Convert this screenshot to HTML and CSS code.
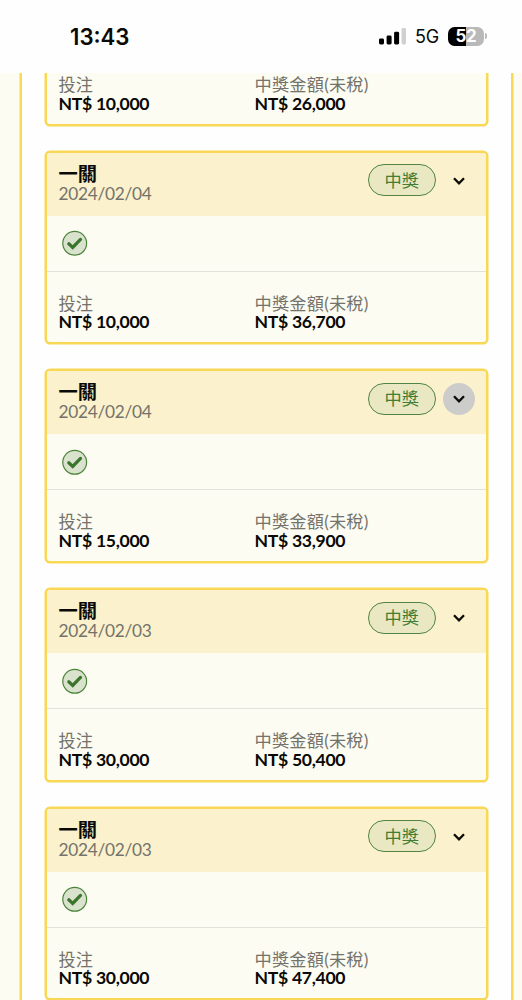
FILE: index.html
```
<!DOCTYPE html>
<html lang="zh-Hant">
<head>
<meta charset="utf-8">
<title>中獎紀錄</title>
<link rel="stylesheet" href="styles.css">
</head>
<body>
<svg class="defs" width="0" height="0">
  <symbol id="check" viewBox="0 0 26 26"><circle cx="12.7" cy="13.3" r="11.9" fill="#d8e2cd" stroke="#4b8438" stroke-width="1.2"/><path d="M6.8 13.8 10.7 17.4 18.5 9.4" fill="none" stroke="#3b752b" stroke-width="3.2" stroke-linecap="round"/></symbol>
  <symbol id="chevron" viewBox="0 0 12 8"><path d="M1 1.3 6 6.3 11 1.3" fill="none" stroke="#0b0b08" stroke-width="2.3"/></symbol>
</svg>
<header class="status">
  <time class="clock">13:43</time>
  <div class="indicators">
    <svg class="signal" width="27" height="17" viewBox="0 0 27 17"><rect x="0" y="10.5" width="5" height="6" rx="1.4"/><rect x="7.6" y="7.5" width="5" height="9" rx="1.4"/><rect x="15.1" y="3.8" width="5" height="12.7" rx="1.4"/><rect x="22.6" y="0" width="4.4" height="16.5" rx="1.4" fill="#d0d0d0"/></svg>
    <span class="network">5G</span>
    <span class="battery"><span class="level"><b>5</b><b>2</b></span><i class="tip"></i></span>
  </div>
</header>
<main class="list">
  <article class="card clipped">
    <dl class="amounts"><div class="stake"><dt>投注</dt><dd>NT$ 10,000</dd></div><div><dt class="wide">中獎金額(未稅)</dt><dd>NT$ 26,000</dd></div></dl>
  </article>
  <article class="card">
    <div class="head"><div class="title"><h2>一關</h2><p>2024/02/04</p></div><span class="badge">中獎</span><button class="toggle"><svg width="12" height="8"><use href="#chevron"/></svg></button></div>
    <div class="result"><svg width="26" height="26"><use href="#check"/></svg></div>
    <dl class="amounts"><div class="stake"><dt>投注</dt><dd>NT$ 10,000</dd></div><div><dt class="wide">中獎金額(未稅)</dt><dd>NT$ 36,700</dd></div></dl>
  </article>
  <article class="card">
    <div class="head"><div class="title"><h2>一關</h2><p>2024/02/04</p></div><span class="badge">中獎</span><button class="toggle active"><svg width="12" height="8"><use href="#chevron"/></svg></button></div>
    <div class="result"><svg width="26" height="26"><use href="#check"/></svg></div>
    <dl class="amounts"><div class="stake"><dt>投注</dt><dd>NT$ 15,000</dd></div><div><dt class="wide">中獎金額(未稅)</dt><dd>NT$ 33,900</dd></div></dl>
  </article>
  <article class="card">
    <div class="head"><div class="title"><h2>一關</h2><p>2024/02/03</p></div><span class="badge">中獎</span><button class="toggle"><svg width="12" height="8"><use href="#chevron"/></svg></button></div>
    <div class="result"><svg width="26" height="26"><use href="#check"/></svg></div>
    <dl class="amounts"><div class="stake"><dt>投注</dt><dd>NT$ 30,000</dd></div><div><dt class="wide">中獎金額(未稅)</dt><dd>NT$ 50,400</dd></div></dl>
  </article>
  <article class="card">
    <div class="head"><div class="title"><h2>一關</h2><p>2024/02/03</p></div><span class="badge">中獎</span><button class="toggle"><svg width="12" height="8"><use href="#chevron"/></svg></button></div>
    <div class="result"><svg width="26" height="26"><use href="#check"/></svg></div>
    <dl class="amounts"><div class="stake"><dt>投注</dt><dd>NT$ 30,000</dd></div><div><dt class="wide">中獎金額(未稅)</dt><dd>NT$ 47,400</dd></div></dl>
  </article>
</main>
</body>
</html>
```
FILE: styles.css
```
* { box-sizing: border-box; margin: 0; padding: 0; }
body { height: 1000px; overflow: hidden; display: flex; flex-direction: column; background: #fdfcf3; color: #090907; font: 17.2px/18.7px Lato, "Noto Sans CJK TC", sans-serif; }
.defs { display: none; }
.status { flex: none; height: 73px; padding: 0 35px 0 70px; background: #fefefe; display: flex; justify-content: space-between; align-items: center; font-family: Inter, sans-serif; position: relative; z-index: 1; }
.clock { font-size: 22.2px; font-weight: 600; line-height: 28px; }
.indicators { display: flex; align-items: center; }
.signal { margin-right: 9px; }
.network { font-size: 18px; width: 25px; margin-right: 8px; padding-top: 2px; letter-spacing: -0.3px; }
.battery { display: flex; align-items: center; gap: 1px; }
.level { width: 36px; height: 19px; border-radius: 6.5px; background: linear-gradient(90deg, #000 51%, #b9b9b9 51%); color: #fff; display: flex; justify-content: center; align-items: center; font-size: 17px; letter-spacing: -0.3px; }
.level b { font-weight: 700; }
.tip { width: 2px; height: 6px; border-radius: 0 2px 2px 0; background: #b9b9b9; }
.list { flex: 1; min-height: 0; margin: 0 9px 0 20px; padding: 0 22.7px 0 23px; border: solid #f8d956; border-width: 0 2px; box-shadow: 0 0 0 0.5px #f8d956; background: #fefefe; display: flex; flex-direction: column; gap: 25px; }
.card { flex: none; height: 193.7px; border: 2px solid #f8d854; border-radius: 5px; box-shadow: 0 0 0 0.5px #f8d854; background: #fcfcf3; overflow: hidden; }
.card.clipped { height: 52.7px; border-top: 0; border-radius: 0 0 5px 5px; }
.head { height: 63px; padding: 0 11.5px; background: #fbf1cc; display: flex; align-items: flex-start; }
.title { flex: 1; padding-top: 10px; }
h2 { font-size: 19.3px; font-weight: 700; line-height: 21px; }
.title p, dt { color: #74736b; }
.title p { padding-top: 1px; font-size: 17.3px; letter-spacing: -0.28px; }
dt { padding-top: 1px; }
dt.wide { letter-spacing: 0.22px; }
.badge { width: 68px; height: 32px; margin-top: 11.5px; padding-top: 1.5px; border: 1.3px solid #508344; border-radius: 17px; background: #e9e8c2; color: #437c35; display: flex; justify-content: center; align-items: center; }
.toggle { width: 32px; height: 32px; margin: 12px 0 0 7px; border: 0; border-radius: 50%; background: none; display: flex; justify-content: center; align-items: center; }
.toggle.active { background: #cccccb; }
.result { height: 56px; padding-left: 15px; border-bottom: 1px solid #e2e2dc; display: flex; align-items: center; }
.amounts { padding: 22px 11.5px 0; display: flex; }
.clipped .amounts { padding-top: 1.8px; }
.stake { width: 196px; }
dd { font-size: 17.6px; font-weight: 700; letter-spacing: -0.3px; }
```
